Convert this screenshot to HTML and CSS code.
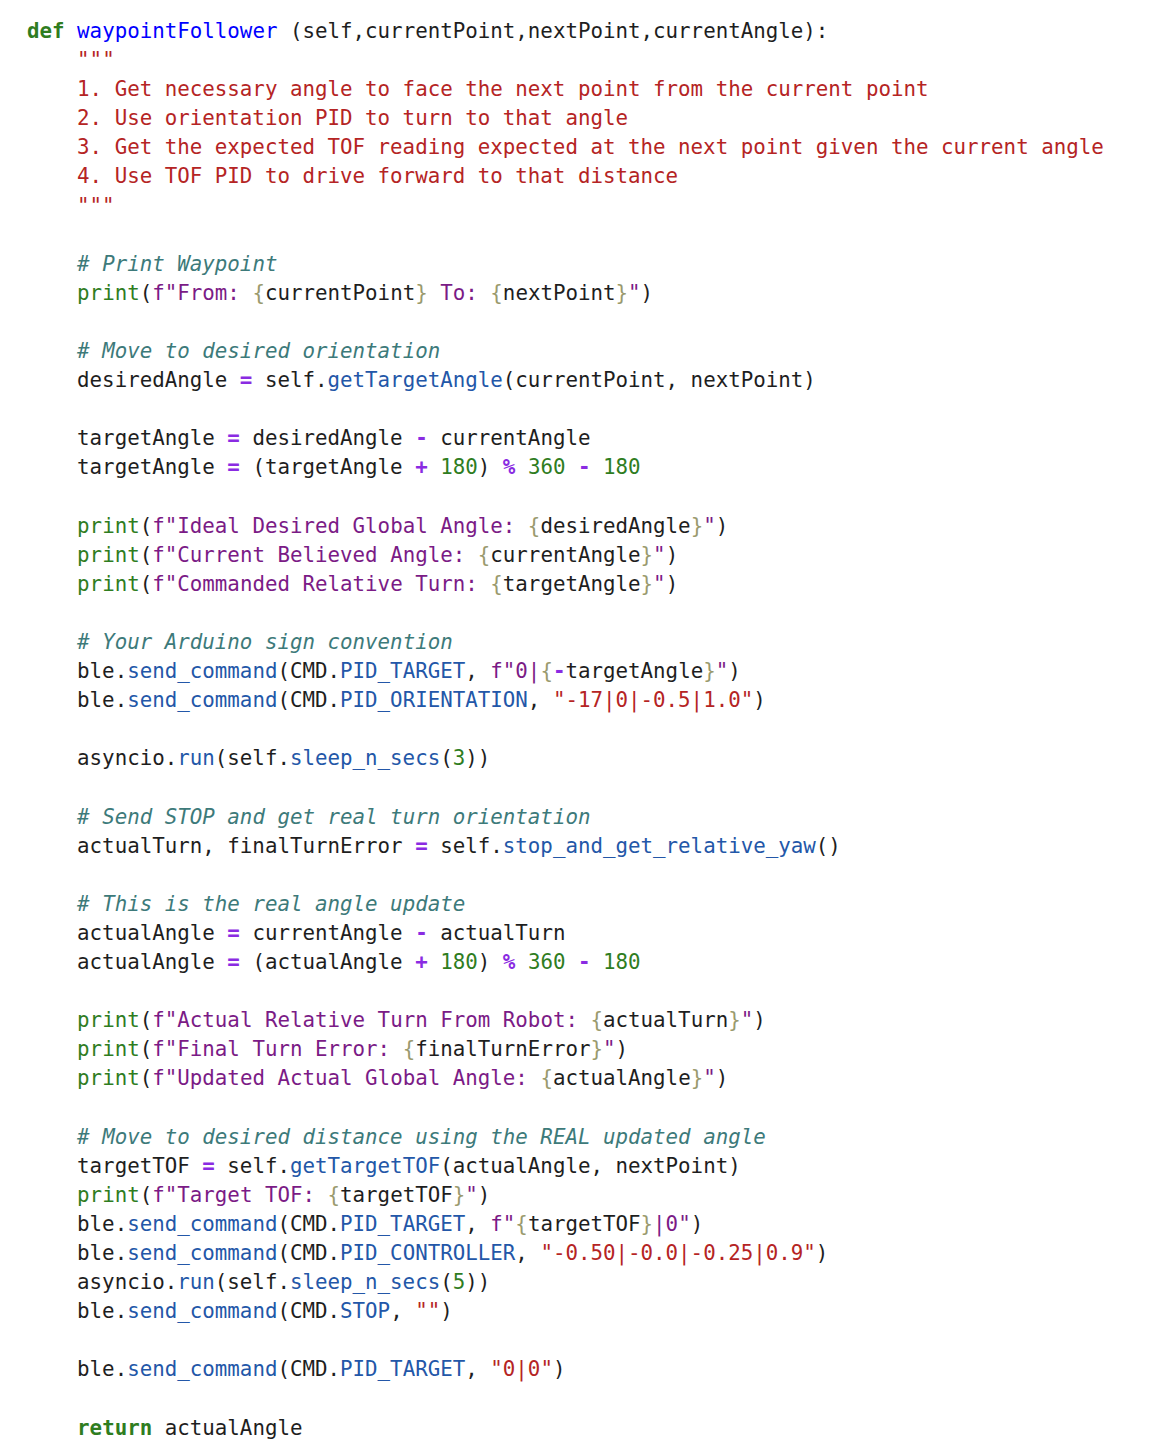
FILE: index.html
```html
<!DOCTYPE html>
<html>
<head>
<meta charset="utf-8">
<link rel="stylesheet" href="styles.css">
</head>
<body>
<pre class="code"><span class="k">def</span> <span class="fn">waypointFollower</span> (self,currentPoint,nextPoint,currentAngle):
    <span class="s">"""</span>
<span class="s">    1. Get necessary angle to face the next point from the current point</span>
<span class="s">    2. Use orientation PID to turn to that angle</span>
<span class="s">    3. Get the expected TOF reading expected at the next point given the current angle</span>
<span class="s">    4. Use TOF PID to drive forward to that distance</span>
<span class="s">    """</span>

    <span class="c"># Print Waypoint</span>
    <span class="bi">print</span>(<span class="f">f"From: </span><span class="b">{</span>currentPoint<span class="b">}</span><span class="f"> To: </span><span class="b">{</span>nextPoint<span class="b">}</span><span class="f">"</span>)

    <span class="c"># Move to desired orientation</span>
    desiredAngle <span class="o">=</span> self.<span class="a">getTargetAngle</span>(currentPoint, nextPoint)

    targetAngle <span class="o">=</span> desiredAngle <span class="o">-</span> currentAngle
    targetAngle <span class="o">=</span> (targetAngle <span class="o">+</span> <span class="n">180</span>) <span class="o">%</span> <span class="n">360</span> <span class="o">-</span> <span class="n">180</span>

    <span class="bi">print</span>(<span class="f">f"Ideal Desired Global Angle: </span><span class="b">{</span>desiredAngle<span class="b">}</span><span class="f">"</span>)
    <span class="bi">print</span>(<span class="f">f"Current Believed Angle: </span><span class="b">{</span>currentAngle<span class="b">}</span><span class="f">"</span>)
    <span class="bi">print</span>(<span class="f">f"Commanded Relative Turn: </span><span class="b">{</span>targetAngle<span class="b">}</span><span class="f">"</span>)

    <span class="c"># Your Arduino sign convention</span>
    ble.<span class="a">send_command</span>(CMD.<span class="a">PID_TARGET</span>, <span class="f">f"0|</span><span class="b">{</span><span class="o">-</span>targetAngle<span class="b">}</span><span class="f">"</span>)
    ble.<span class="a">send_command</span>(CMD.<span class="a">PID_ORIENTATION</span>, <span class="s">"-17|0|-0.5|1.0"</span>)

    asyncio.<span class="a">run</span>(self.<span class="a">sleep_n_secs</span>(<span class="n">3</span>))

    <span class="c"># Send STOP and get real turn orientation</span>
    actualTurn, finalTurnError <span class="o">=</span> self.<span class="a">stop_and_get_relative_yaw</span>()

    <span class="c"># This is the real angle update</span>
    actualAngle <span class="o">=</span> currentAngle <span class="o">-</span> actualTurn
    actualAngle <span class="o">=</span> (actualAngle <span class="o">+</span> <span class="n">180</span>) <span class="o">%</span> <span class="n">360</span> <span class="o">-</span> <span class="n">180</span>

    <span class="bi">print</span>(<span class="f">f"Actual Relative Turn From Robot: </span><span class="b">{</span>actualTurn<span class="b">}</span><span class="f">"</span>)
    <span class="bi">print</span>(<span class="f">f"Final Turn Error: </span><span class="b">{</span>finalTurnError<span class="b">}</span><span class="f">"</span>)
    <span class="bi">print</span>(<span class="f">f"Updated Actual Global Angle: </span><span class="b">{</span>actualAngle<span class="b">}</span><span class="f">"</span>)

    <span class="c"># Move to desired distance using the REAL updated angle</span>
    targetTOF <span class="o">=</span> self.<span class="a">getTargetTOF</span>(actualAngle, nextPoint)
    <span class="bi">print</span>(<span class="f">f"Target TOF: </span><span class="b">{</span>targetTOF<span class="b">}</span><span class="f">"</span>)
    ble.<span class="a">send_command</span>(CMD.<span class="a">PID_TARGET</span>, <span class="f">f"</span><span class="b">{</span>targetTOF<span class="b">}</span><span class="f">|0"</span>)
    ble.<span class="a">send_command</span>(CMD.<span class="a">PID_CONTROLLER</span>, <span class="s">"-0.50|-0.0|-0.25|0.9"</span>)
    asyncio.<span class="a">run</span>(self.<span class="a">sleep_n_secs</span>(<span class="n">5</span>))
    ble.<span class="a">send_command</span>(CMD.<span class="a">STOP</span>, <span class="s">""</span>)

    ble.<span class="a">send_command</span>(CMD.<span class="a">PID_TARGET</span>, <span class="s">"0|0"</span>)

    <span class="k">return</span> actualAngle</pre>
</body>
</html>
```

FILE: styles.css
```css
html, body {
  margin: 0;
  padding: 0;
  background: #ffffff;
}

body {
  padding: 17px 0 0 27px;
}

.code {
  margin: 0;
  font-family: "DejaVu Sans Mono", "Liberation Mono", monospace;
  font-size: 20.8px;
  line-height: 29.1px;
  color: #1e1e1e;
  white-space: pre;
}

.k { color: #2f7d1f; font-weight: bold; }
.fn { color: #0000ff; }
.s { color: #b52424; }
.f { color: #7b1b86; }
.b { color: #9a9a6e; }
.c { color: #3d7a7a; font-style: italic; }
.bi { color: #2f7d1f; }
.o { color: #8a2be2; font-weight: bold; }
.n { color: #2f7d1f; }
.a { color: #2357a8; }
```
